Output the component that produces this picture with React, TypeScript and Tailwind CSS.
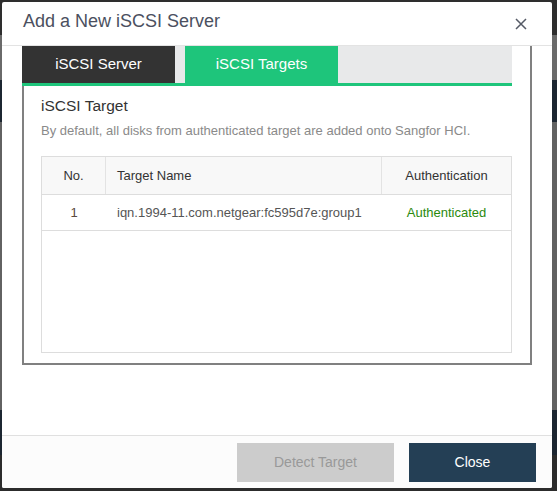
import React from 'react';

const font = { fontFamily: '"Liberation Sans", Arial, sans-serif' };

export default function App() {
    return (
        <div className="relative w-[557px] h-[491px] overflow-hidden bg-[#5f5f5f]" style={font}>
            {/* Backdrop page behind the dialog */}
            <div className="flex flex-col h-full">
                <div className="h-[35px] bg-[#2e2e2e]"></div>
                <div className="h-[45px] bg-[#6a6a6a]"></div>
                <div className="h-[42px] bg-[#1c2631]"></div>
                <div className="h-[288px] bg-[#626262]"></div>
                <div className="h-[45px] bg-[#1c2631]"></div>
                <div className="flex-1 bg-[#2c2c2c]"></div>
            </div>

            {/* Dialog */}
            <div className="absolute left-[2px] top-[2px] w-[550px] h-[486px] bg-white rounded-[2px] flex flex-col overflow-hidden">
                <div className="h-[44px] flex items-center justify-between pl-[21px] pr-[25px] border-b border-[#e3e3e3] flex-shrink-0">
                    <h2 className="text-[18px] text-[#4b5060] leading-none -mt-[6px]">Add a New iSCSI Server</h2>
                    <button className="text-[#555a66]">
                        <svg width="12" height="12" viewBox="0 0 12 12" fill="none" stroke="currentColor" strokeWidth="1.5">
                            <path d="M1 1L11 11M11 1L1 11" />
                        </svg>
                    </button>
                </div>

                <div className="h-[389px] flex-shrink-0 pl-[20px]">
                    <div className="w-[510px] flex flex-col border-r-2 border-b-2 border-[#808080]">
                        {/* Tabs */}
                        <div className="w-[490px] h-[37px] flex bg-[#e8e9ea]">
                            <div className="w-[153px] bg-[#333333] text-white text-[15px] flex items-center justify-center">iSCSI Server</div>
                            <div className="w-[10px]"></div>
                            <div className="w-[153px] bg-[#1ec57b] text-white text-[15px] flex items-center justify-center">iSCSI Targets</div>
                        </div>
                        <div className="w-[490px] h-[3px] bg-[#1ec57b]"></div>

                        <div className="border-l-2 border-[#808080] pl-[17px] pt-[10px] pb-[10px]">
                            <div className="text-[15.5px] leading-[20px] text-[#333]">iSCSI Target</div>
                            <p className="mt-[6px] text-[13px] leading-[18px] text-[#8a8a8a]">By default, all disks from authenticated target are added onto Sangfor HCI.</p>

                            <div className="mt-[16px] w-[471px] h-[197px] border border-[#dddddd] flex flex-col">
                                <div className="h-[38px] flex bg-[#f8f8f8] border-b border-[#dddddd] text-[13px] text-[#333]">
                                    <div className="w-[64px] border-r border-[#e3e3e3] flex items-center justify-center">No.</div>
                                    <div className="w-[276px] border-r border-[#e3e3e3] flex items-center pl-[11px]">Target Name</div>
                                    <div className="flex-1 flex items-center justify-center">Authentication</div>
                                </div>
                                <div className="h-[36px] flex border-b border-[#dddddd] text-[13px]">
                                    <div className="w-[64px] flex items-center justify-center text-[#5a4a40]">1</div>
                                    <div className="w-[276px] flex items-center pl-[11px] text-[#555]">iqn.1994-11.com.netgear:fc595d7e:group1</div>
                                    <div className="flex-1 flex items-center justify-center text-[#2b8a0e]">Authenticated</div>
                                </div>
                            </div>
                        </div>
                    </div>
                </div>

                <div className="flex-1 bg-[#fcfcfc] border-t border-[#e0e0e0] flex justify-end items-start gap-[15px] pt-[7px] pr-[16px]">
                    <button className="w-[157px] h-[39px] bg-[#cccccc] text-[#999] text-[14px]">Detect Target</button>
                    <button className="w-[127px] h-[39px] bg-[#243f55] text-white text-[14px]">Close</button>
                </div>
            </div>
        </div>
    );
}
